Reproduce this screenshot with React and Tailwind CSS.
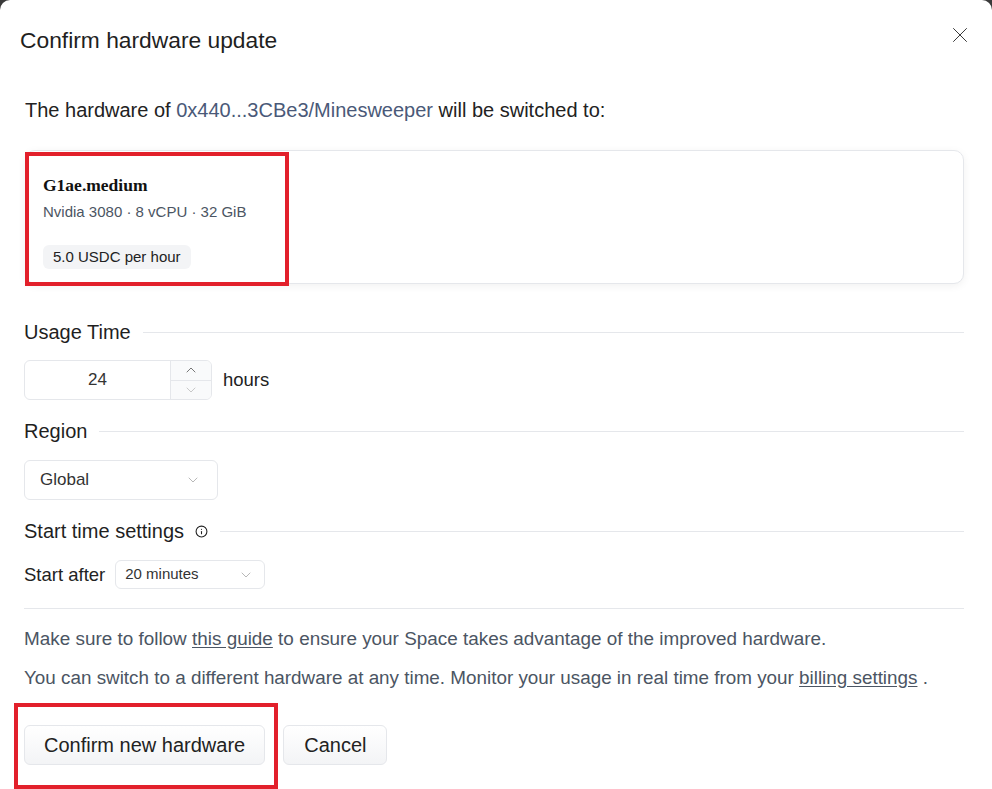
import { ChevronDown, ChevronUp, X, Info } from 'lucide-react';

function SectionTitle({ children, icon }) {
  return (
    <div className="flex items-center gap-[12px]">
      <span className="flex items-center text-[20px] leading-6 text-[#1f1f1f]">
        {children}
        {icon}
      </span>
      <div className="h-px flex-1 bg-[#e5e7eb]" />
    </div>
  );
}

function App() {
  return (
    <div
      className="min-h-[789px] w-[992px] bg-[#3a3a3a]"
      style={{ fontFamily: '"Liberation Sans", Arial, sans-serif' }}
    >
      <div className="relative h-[789px] overflow-hidden rounded-t-[10px] bg-white">
        <div className="flex items-start justify-between pt-[26px] pl-[20px] pr-[19px]">
          <h1 className="text-[22.8px] leading-7 text-[#1f1f1f]">Confirm hardware update</h1>
          <X className="-mt-[4px] h-[26px] w-[26px] text-[#333]" strokeWidth={0.9} />
        </div>

        <div className="px-[24px] pr-[28px]">
          <p className="mt-[44px] pl-px text-[20px] leading-6 text-[#222]">
            The hardware of <span className="text-[#4a5978]">0x440...3CBe3/Minesweeper</span> will be
            switched to:
          </p>

          <div className="mt-[28px] ml-px rounded-[10px] border border-[#e5e7eb] bg-white px-[17px] pt-[23px] pb-[14px] shadow-[0_2px_8px_rgba(0,0,0,0.06)]">
            <div
              className="text-[17.5px] leading-[22px] font-bold text-[#111]"
              style={{ fontFamily: '"Liberation Serif", "Times New Roman", serif' }}
            >
              G1ae.medium
            </div>
            <div className="mt-[6px] text-[15px] leading-5 text-[#4b5563]">
              Nvidia 3080 · 8 vCPU · 32 GiB
            </div>
            <div className="mt-[23px] inline-block rounded-md bg-[#f3f4f6] px-[10px] py-[2px] text-[15px] leading-5 text-[#222]">
              5.0 USDC per hour
            </div>
          </div>

          <div className="mt-[36px]">
            <SectionTitle>Usage Time</SectionTitle>
          </div>
          <div className="mt-[16px] flex items-center gap-[11px]">
            <div className="flex h-[40px] w-[188px] overflow-hidden rounded-md border border-[#e5e7eb]">
              <div className="flex flex-1 items-center justify-center text-[17px] text-[#333]">24</div>
              <div className="flex w-[41px] flex-col border-l border-[#e5e7eb] bg-[#f9fafb]">
                <div className="flex flex-1 items-center justify-center border-b border-[#e5e7eb]">
                  <ChevronUp className="h-4 w-4 text-[#555]" strokeWidth={1.2} />
                </div>
                <div className="flex flex-1 items-center justify-center">
                  <ChevronDown className="h-4 w-4 text-[#bbb]" strokeWidth={1.2} />
                </div>
              </div>
            </div>
            <span className="text-[18.5px] text-[#222]">hours</span>
          </div>

          <div className="mt-[19px]">
            <SectionTitle>Region</SectionTitle>
          </div>
          <div className="mt-[17px] flex h-[40px] w-[194px] items-center justify-between rounded-md border border-[#e5e7eb] pl-[15px] pr-[16px] text-[17px] text-[#333]">
            Global
            <ChevronDown className="h-4 w-4 text-[#aaa]" strokeWidth={1.25} />
          </div>

          <div className="mt-[19px]">
            <SectionTitle icon={<Info className="ml-[11px] h-[13px] w-[13px] text-[#222]" strokeWidth={2} />}>
              Start time settings
            </SectionTitle>
          </div>
          <div className="mt-[17px] flex items-center gap-[10px]">
            <span className="text-[18.5px] text-[#222]">Start after</span>
            <div className="flex h-[29px] w-[150px] items-center justify-between rounded-md border border-[#e5e7eb] pl-[9px] pr-[10px] text-[15px] text-[#333]">
              20 minutes
              <ChevronDown className="h-4 w-4 text-[#aaa]" strokeWidth={1.25} />
            </div>
          </div>

          <div className="mt-[19px] h-px bg-[#e5e7eb]" />

          <p className="mt-[18px] text-[18.9px] leading-6 text-[#4b5563]">
            Make sure to follow <span className="underline underline-offset-2">this guide</span> to
            ensure your Space takes advantage of the improved hardware.
          </p>
          <p className="mt-[15px] text-[18.85px] leading-6 text-[#4b5563]">
            You can switch to a different hardware at any time. Monitor your usage in real time from
            your <span className="underline underline-offset-2">billing settings</span> .
          </p>

          <div className="mt-[35px] flex gap-[18px]">
            <button className="h-[40px] rounded-md border border-[#e5e7eb] bg-gradient-to-b from-white to-[#f3f4f6] px-[19px] text-[20px] text-[#222]">
              Confirm new hardware
            </button>
            <button className="h-[40px] rounded-md border border-[#e5e7eb] bg-gradient-to-b from-white to-[#f3f4f6] px-[20px] text-[20px] text-[#222]">
              Cancel
            </button>
          </div>
        </div>

        <div className="pointer-events-none absolute top-[152px] left-[25px] h-[134px] w-[264px] border-[4px] border-[#e2202b]" />
        <div className="pointer-events-none absolute top-[703px] left-[14px] h-[86px] w-[264px] border-[4px] border-[#e2202b]" />
      </div>
    </div>
  );
}

export default App;
